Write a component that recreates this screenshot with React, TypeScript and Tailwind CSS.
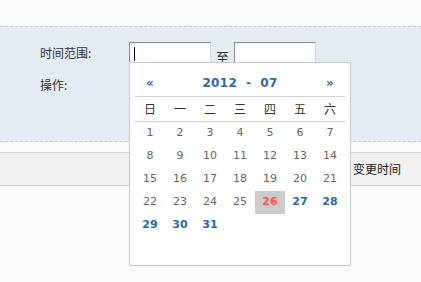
import React from "react";

const weekDays = ["日", "一", "二", "三", "四", "五", "六"];

const DatePopup = () => {
  const days: (number | null)[] = [];
  for (let d = 1; d <= 31; d++) days.push(d);
  while (days.length < 42) days.push(null);
  const rows = [];
  for (let i = 0; i < 42; i += 7) rows.push(days.slice(i, i + 7));

  return (
    <div className="absolute left-[129px] top-[62px] w-[222px] h-[204px] border border-[#c8c8c8] bg-white px-[5px]">
      {/* header */}
      <div className="flex items-center h-[34px] pt-[6px] border-b border-[#cfcfcf] text-[#2d68a8] font-bold">
        <span className="w-[30px] text-center text-[12px]">«</span>
        <span className="flex-1 text-center text-[12px] tracking-[0.3px]">
          2012&nbsp; - &nbsp;07
        </span>
        <span className="w-[30px] text-center text-[12px]">»</span>
      </div>
      <div className="grid grid-cols-7 h-[25px] border-b border-[#cfcfcf] text-[#333] text-[12px] font-['Noto_Sans_CJK_SC',sans-serif]">
        {weekDays.map((w) => (
          <span key={w} className="flex items-center justify-center">
            {w}
          </span>
        ))}
      </div>
      {rows.map((row, ri) => (
        <div key={ri} className="grid grid-cols-7 h-[23px] text-[11px]">
          {row.map((d, ci) => {
            if (d === null) return <span key={ci} />;
            if (d === 26)
              return (
                <span key={ci} className="flex items-center justify-center bg-[#cbcbcb] text-[#f5584a] font-bold">
                  {d}
                </span>
              );
            if (d > 26)
              return (
                <span key={ci} className="flex items-center justify-center text-[#2b67a6] font-bold">
                  {d}
                </span>
              );
            return (
              <span key={ci} className="flex items-center justify-center text-[#666]">
                {d}
              </span>
            );
          })}
        </div>
      ))}
    </div>
  );
};

export default function App() {
  return (
    <div className="relative w-[421px] h-[282px] overflow-hidden bg-[#fafafa] font-['DejaVu_Sans','Noto_Sans_CJK_SC',sans-serif] text-[#333]">
      <div className="h-[26px]" />
      <div className="h-[116px] bg-[#e4ebf3] border-y border-dashed border-[#c9c9c9] pl-[40px] pt-[15px] text-[12px] font-['Noto_Sans_CJK_SC',sans-serif]">
        <div className="flex items-start h-[32px]">
          <span className="w-[89px] pt-[2px] leading-[18px]">时间范围:</span>
          <div className="relative w-[82px] h-[22px] bg-white border-t border-l border-[#8a8a8a] border-r-[#d6d6d6] border-b-[#d6d6d6] border-r border-b">
            <div className="absolute left-[4px] top-[4px] w-px h-[14px] bg-black" />
          </div>
          <span className="w-[23px] text-center pt-[6px] leading-[18px] text-[13px]">至</span>
          <div className="w-[82px] h-[22px] bg-white border-t border-l border-[#8a8a8a] border-r-[#d6d6d6] border-b-[#d6d6d6] border-r border-b" />
        </div>
        <div className="leading-[18px] pt-[2px]">操作:</div>
      </div>
      <div className="h-[10px]" />
      <div className="h-[34px] bg-[#f1f0ee] border-y border-[#d2d2d2] pl-[353px] flex items-center text-[12px] font-['Noto_Sans_CJK_SC',sans-serif] text-[#222]">
        变更时间
      </div>
      <DatePopup />
    </div>
  );
}
